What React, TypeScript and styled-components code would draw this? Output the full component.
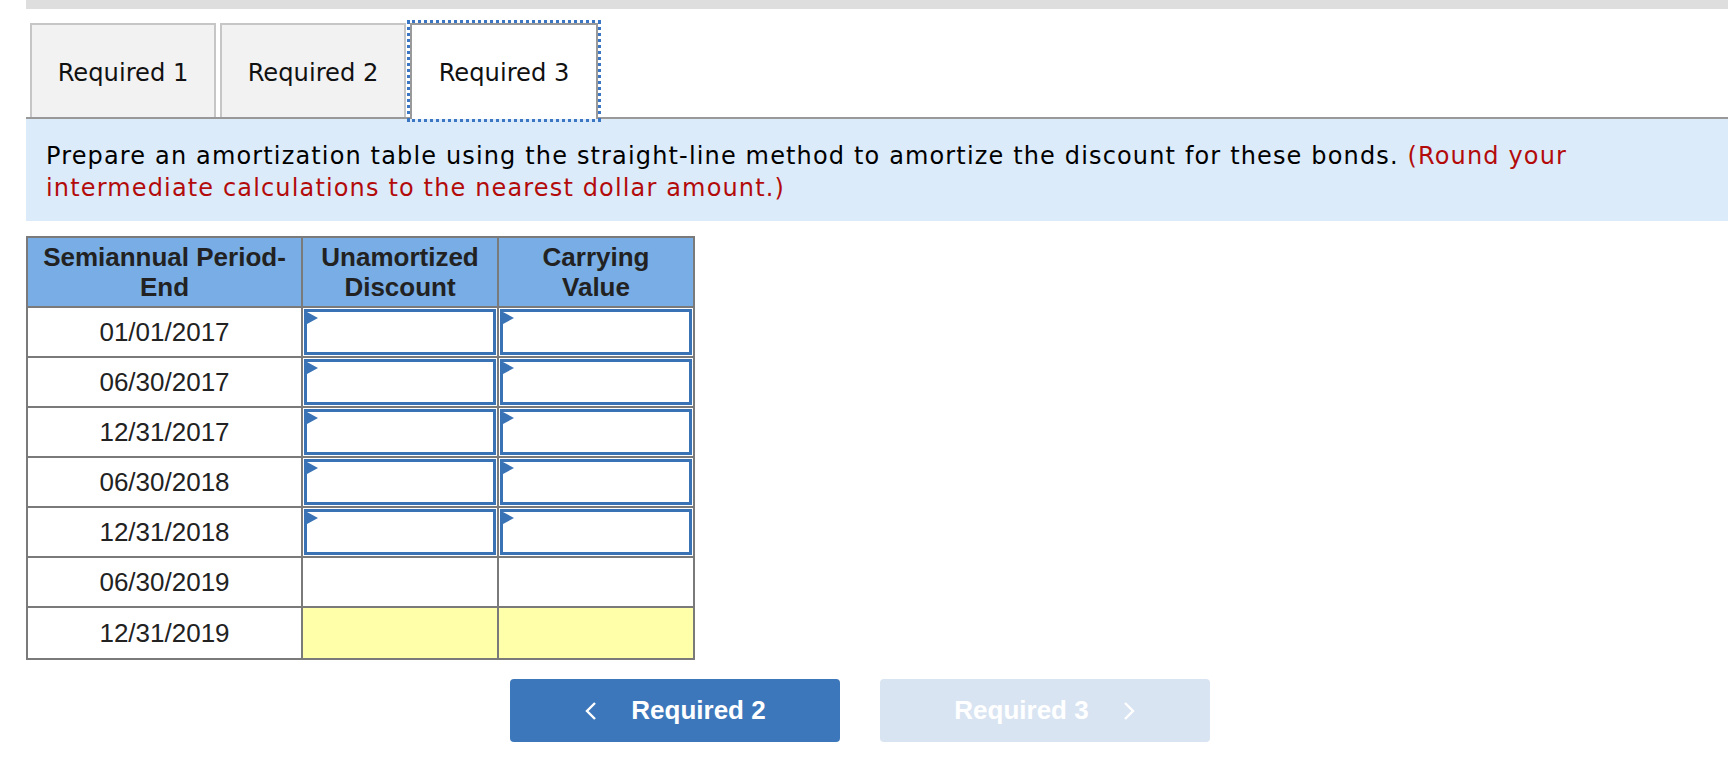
import React from "react";
import styled, { createGlobalStyle } from "styled-components";

const GlobalStyle = createGlobalStyle`
  body {
    margin: 0;
    background: #fff;
    font-family: "DejaVu Sans", Verdana, sans-serif;
  }
`;

const Page = styled.div`
  padding: 0 8px 0 26px;
`;

const TopBar = styled.div`
  height: 9px;
  background: #dedede;
`;

const TabRow = styled.div`
  display: flex;
  gap: 4px;
  margin-top: 14px;
  padding-left: 4px;
  border-bottom: 2px solid #999;
`;

const Tab = styled.div<{ $active?: boolean }>`
  width: ${(p) => (p.$active ? 188 : 186)}px;
  box-sizing: border-box;
  display: flex;
  align-items: center;
  justify-content: center;
  font-size: 24.2px;
  color: #111;
  background: ${(p) => (p.$active ? "#fff" : "#f2f2f2")};
  border: 2px solid ${(p) => (p.$active ? "#999" : "#c6c6c6")};
  border-bottom: none;
  outline: ${(p) => (p.$active ? "3px dotted #3a76c4" : "none")};
  outline-offset: 0;
  margin-bottom: ${(p) => (p.$active ? "-2px" : "0")};
  height: ${(p) => (p.$active ? 96 : 94)}px;
  padding-top: 4px;
  padding-bottom: ${(p) => (p.$active ? 2 : 0)}px;
`;

const Prompt = styled.div`
  background: #dcebf9;
  padding: 21px 20px 17px;
  font-size: 24px;
  letter-spacing: 1.15px;
  line-height: 32px;
  color: #000;
`;

const Hint = styled.span`
  color: #b30b0b;
`;

const Table = styled.table`
  margin-top: 15px;
  border-collapse: collapse;
  font-family: "Liberation Sans", Arial, sans-serif;
  color: #222;
  table-layout: fixed;
  width: 667px;
`;

const Head = styled.th<{ $w: number }>`
  width: ${(p) => p.$w}px;
  box-sizing: border-box;
  background: #78ade5;
  border: 2px solid #7a7a7a;
  font-size: 26px;
  font-weight: bold;
  line-height: 30px;
  height: 70px;
  padding: 0;
`;

const DateCell = styled.td<{ $tall?: boolean }>`
  border: 2px solid #7a7a7a;
  height: ${(p) => (p.$tall ? 50 : 48)}px;
  padding: 0;
  text-align: center;
  font-size: 26px;
`;

const ValueCell = styled.td<{ $total?: boolean }>`
  border: 2px solid #7a7a7a;
  padding: 0;
  background: ${(p) => (p.$total ? "#ffffa9" : "#fff")};
`;

const Entry = styled.div`
  position: relative;
  margin: 1px;
  height: 46px;
  box-sizing: border-box;
  border: 3px solid #3a72b6;
  background: #fff;

  &::before {
    content: "";
    position: absolute;
    top: 0;
    left: 0;
    border-top: 6.5px solid transparent;
    border-bottom: 6.5px solid transparent;
    border-left: 11px solid #3a72b6;
  }
`;

const NavRow = styled.div`
  display: flex;
  gap: 40px;
  margin-top: 19px;
  padding-left: 484px;
`;

const NavButton = styled.button<{ $disabled?: boolean }>`
  width: 330px;
  height: 63px;
  border: none;
  border-radius: 4px;
  background: ${(p) => (p.$disabled ? "#d9e4f2" : "#3b77ba")};
  color: #fff;
  display: flex;
  align-items: center;
  justify-content: center;
  gap: 34px;
  font-family: "Liberation Sans", Arial, sans-serif;
  font-weight: bold;
  font-size: 26px;
  padding: 0;
`;

function Chevron({ dir }: { dir: "left" | "right" }) {
  return (
    <svg width="13" height="20" viewBox="0 0 13 20">
      <path
        d={dir === "left" ? "M11 2 L3 10 L11 18" : "M2 2 L10 10 L2 18"}
        fill="none"
        stroke="#fff"
        strokeWidth="2.4"
      />
    </svg>
  );
}

const rows = [
  { date: "01/01/2017", kind: "input" },
  { date: "06/30/2017", kind: "input" },
  { date: "12/31/2017", kind: "input" },
  { date: "06/30/2018", kind: "input" },
  { date: "12/31/2018", kind: "input" },
  { date: "06/30/2019", kind: "blank" },
  { date: "12/31/2019", kind: "total" },
];

export default function App() {
  return (
    <>
      <GlobalStyle />
      <Page>
        <TopBar />
        <TabRow>
          <Tab>Required 1</Tab>
          <Tab>Required 2</Tab>
          <Tab $active>Required 3</Tab>
        </TabRow>
        <Prompt>
          Prepare an amortization table using the straight-line method to
          amortize the discount for these bonds.{" "}
          <Hint>(Round your intermediate calculations to the nearest dollar amount.)</Hint>
        </Prompt>
        <Table>
          <thead>
            <tr>
              <Head $w={275}>
                Semiannual Period-
                <br />
                End
              </Head>
              <Head $w={196}>
                Unamortized
                <br />
                Discount
              </Head>
              <Head $w={196}>
                Carrying
                <br />
                Value
              </Head>
            </tr>
          </thead>
          <tbody>
            {rows.map((r) => (
              <tr key={r.date}>
                <DateCell $tall={r.kind === "total"}>{r.date}</DateCell>
                <ValueCell $total={r.kind === "total"}>
                  {r.kind === "input" && <Entry />}
                </ValueCell>
                <ValueCell $total={r.kind === "total"}>
                  {r.kind === "input" && <Entry />}
                </ValueCell>
              </tr>
            ))}
          </tbody>
        </Table>
        <NavRow>
          <NavButton>
            <Chevron dir="left" />
            Required 2
          </NavButton>
          <NavButton $disabled>
            Required 3
            <Chevron dir="right" />
          </NavButton>
        </NavRow>
      </Page>
    </>
  );
}
